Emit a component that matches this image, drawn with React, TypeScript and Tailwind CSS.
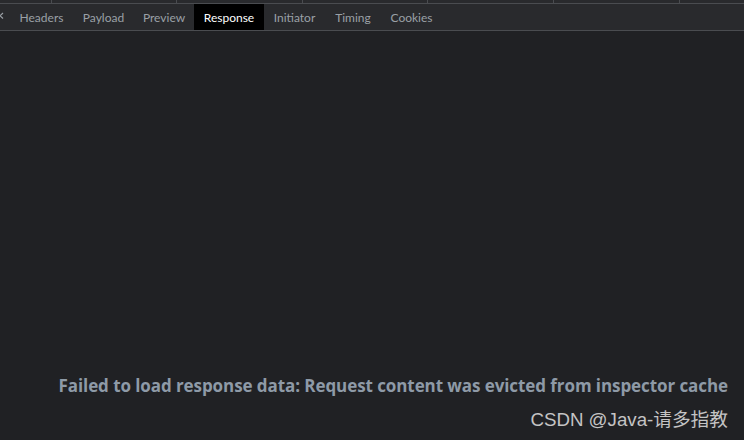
import React from "react";

const tabs: { label: string; w: string }[] = [
  { label: "Headers", w: "w-[63px]" },
  { label: "Payload", w: "w-[61px]" },
  { label: "Preview", w: "w-[60px]" },
  { label: "Response", w: "w-[70px]" },
  { label: "Initiator", w: "w-[61px]" },
  { label: "Timing", w: "w-[56px]" },
  { label: "Cookies", w: "w-[61px]" },
];

export default function App() {
  return (
    <div
      className="relative flex h-[440px] w-[744px] flex-col overflow-hidden bg-[#202124]"
      style={{ fontFamily: '"Open Sans", "Noto Sans", sans-serif' }}
    >
      {/* top strip of table header */}
      <div className="flex h-[4px] shrink-0 border-b border-[#4a4c50] bg-[#292a2d]">
        <div className="w-[52px] shrink-0 border-r border-[#4a4c50]" />
        <div className="w-[125px] shrink-0 border-r border-[#4a4c50]" />
        <div className="w-[126px] shrink-0 border-r border-[#4a4c50]" />
        <div className="w-[125px] shrink-0 border-r border-[#4a4c50]" />
        <div className="w-[126px] shrink-0 border-r border-[#4a4c50]" />
        <div className="w-[126px] shrink-0 border-r border-[#4a4c50]" />
        <div className="flex-1" />
      </div>
      {/* tab bar */}
      <div
        className="flex h-[27px] shrink-0 items-stretch border-b border-[#4a4c50] bg-[#292a2d] text-[12px]"
        style={{ fontFamily: 'Lato, "Open Sans", sans-serif' }}
      >
        <svg width="10" height="26" className="shrink-0">
          <path d="M-3 9 L3 14.5 M-3 14.5 L3 9" stroke="#9aa0a6" strokeWidth="1.2" />
        </svg>
        {tabs.map((t) => (
          <div
            key={t.label}
            className={
              t.label === "Response"
                ? `flex ${t.w} shrink-0 items-center justify-center bg-black pt-[2px] text-white`
                : `flex ${t.w} shrink-0 items-center justify-center pt-[2px] text-[#9aa0a6]`
            }
          >
            {t.label}
          </div>
        ))}
      </div>
      <div className="flex flex-1 flex-col">
        <div className="flex-1" />
        <div className="pb-[42px] pr-[16px] text-right text-[17px] font-bold tracking-[-0.08px] text-[#8e9aa7]">
          Failed to load response data: Request content was evicted from inspector cache
        </div>
      </div>
      <div
        className="absolute bottom-[6px] right-[16px] text-[18.7px] text-[#c4c4c4]"
        style={{ fontFamily: '"Liberation Sans", "Noto Sans CJK SC", sans-serif' }}
      >
        CSDN @Java-请多指教
      </div>
    </div>
  );
}
